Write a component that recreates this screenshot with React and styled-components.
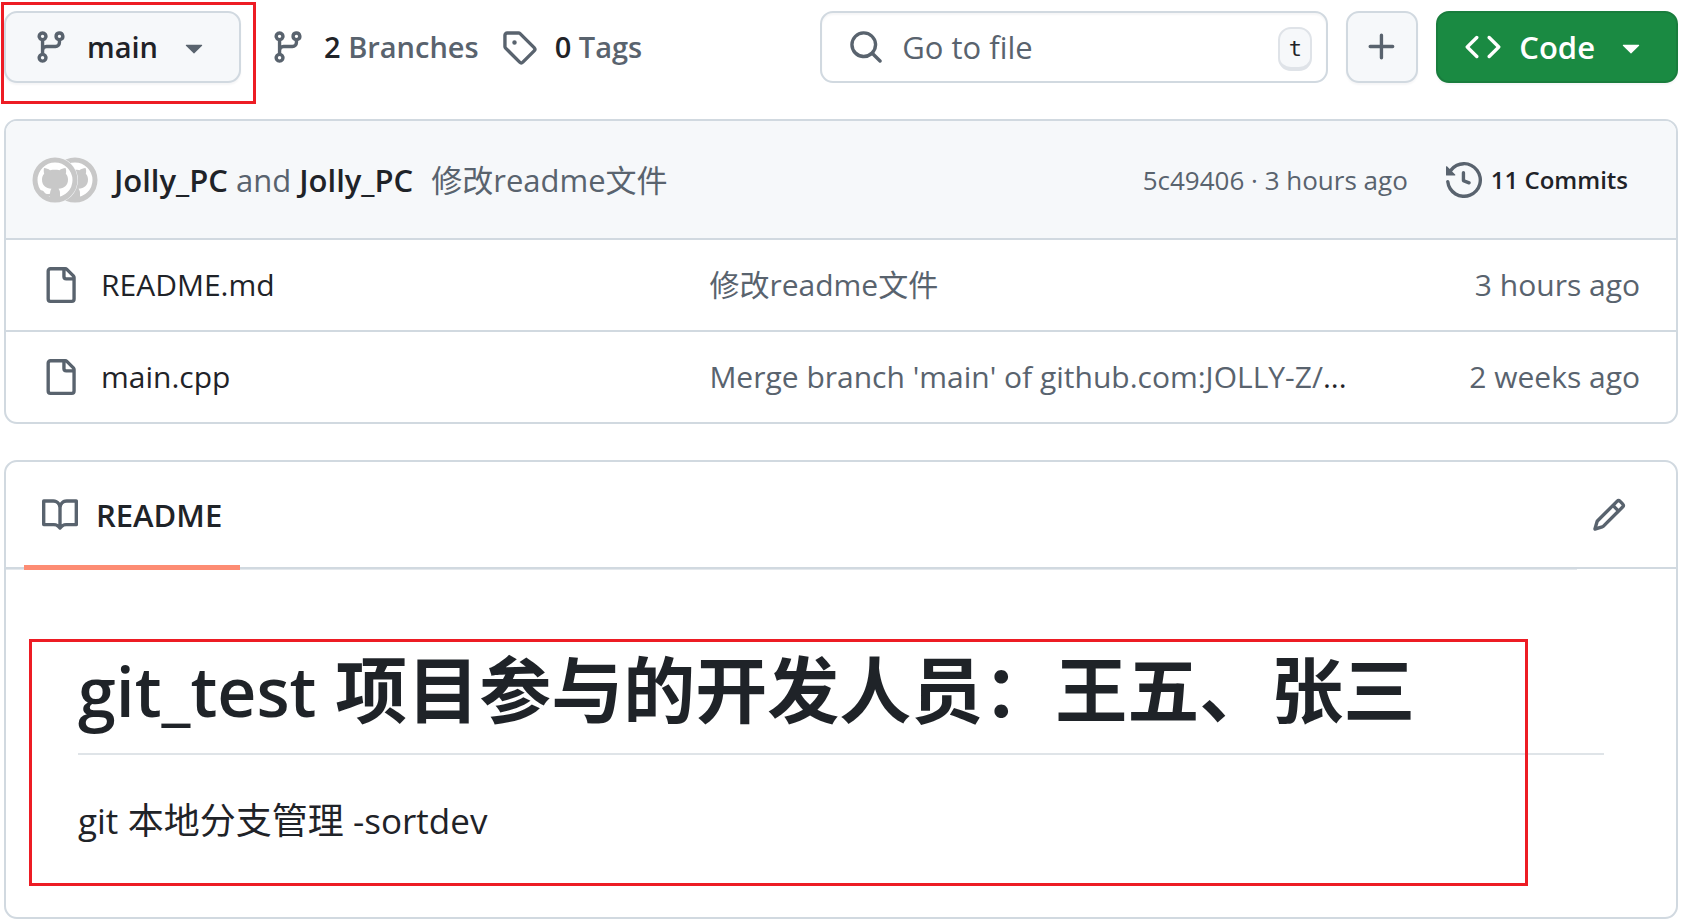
import React from 'react'
import styled, { createGlobalStyle } from 'styled-components';

const GlobalStyle = createGlobalStyle`
  *{
    box-sizing: border-box;
  }
  body{
    margin: 0;
    background-color: #ffffff;
    color: #1f2328;
    font-family: 'Open Sans', 'Noto Sans', 'Noto Sans CJK SC', sans-serif;
    font-size: 30px;
    line-height: 48px;
  }
  a{
    color: inherit;
    text-decoration: none;
  }
  button, input{
    font: inherit;
    color: inherit;
  }
`;

const ICONS = {
  branch: 'M9.5 3.25a2.25 2.25 0 1 1 3 2.122V6A2.5 2.5 0 0 1 10 8.5H6a1 1 0 0 0-1 1v1.128a2.251 2.251 0 1 1-1.5 0V5.372a2.25 2.25 0 1 1 1.5 0v1.836A2.493 2.493 0 0 1 6 7h4a1 1 0 0 0 1-1v-.628A2.25 2.25 0 0 1 9.5 3.25Zm-6 0a.75.75 0 1 0 1.5 0 .75.75 0 0 0-1.5 0Zm8.25-.75a.75.75 0 1 0 0 1.5.75.75 0 0 0 0-1.5ZM4.25 12a.75.75 0 1 0 0 1.5.75.75 0 0 0 0-1.5Z',
  tag: 'M1 7.775V2.75C1 1.784 1.784 1 2.75 1h5.025c.464 0 .91.184 1.238.513l6.25 6.25a1.75 1.75 0 0 1 0 2.474l-5.026 5.026a1.75 1.75 0 0 1-2.474 0l-6.25-6.25A1.752 1.752 0 0 1 1 7.775Zm1.5 0c0 .066.026.13.073.177l6.25 6.25a.25.25 0 0 0 .354 0l5.025-5.025a.25.25 0 0 0 0-.354l-6.25-6.25a.25.25 0 0 0-.177-.073H2.75a.25.25 0 0 0-.25.25ZM6 5a1 1 0 1 1 0 2 1 1 0 0 1 0-2Z',
  search: 'M10.68 11.74a6 6 0 0 1-7.922-8.982 6 6 0 0 1 8.982 7.922l3.04 3.04a.749.749 0 0 1-.326 1.275.749.749 0 0 1-.734-.215ZM11.5 7a4.499 4.499 0 1 0-8.997 0A4.499 4.499 0 0 0 11.5 7Z',
  plus: 'M7.75 2a.75.75 0 0 1 .75.75V7h4.25a.75.75 0 0 1 0 1.5H8.5v4.25a.75.75 0 0 1-1.5 0V8.5H2.75a.75.75 0 0 1 0-1.5H7V2.75A.75.75 0 0 1 7.75 2Z',
  code: 'm11.28 3.22 4.25 4.25a.75.75 0 0 1 0 1.06l-4.25 4.25a.749.749 0 0 1-1.275-.326.749.749 0 0 1 .215-.734L13.94 8l-3.72-3.72a.749.749 0 0 1 .326-1.275.749.749 0 0 1 .734.215Zm-6.56 0a.751.751 0 0 1 1.042.018.751.751 0 0 1 .018 1.042L2.06 8l3.72 3.72a.749.749 0 0 1-.326 1.275.749.749 0 0 1-.734-.215L.47 8.53a.75.75 0 0 1 0-1.06Z',
  caret: 'm4.427 7.427 3.396 3.396a.25.25 0 0 0 .354 0l3.396-3.396A.25.25 0 0 0 11.396 7H4.604a.25.25 0 0 0-.177.427Z',
  history: 'm.427 1.927 1.215 1.215a8.002 8.002 0 1 1-1.6 5.685.75.75 0 1 1 1.493-.154 6.5 6.5 0 1 0 1.18-4.458l1.358 1.358A.25.25 0 0 1 3.896 6H.25A.25.25 0 0 1 0 5.75V2.104a.25.25 0 0 1 .427-.177ZM7.75 4a.75.75 0 0 1 .75.75v2.992l2.028.812a.75.75 0 0 1-.557 1.392l-2.5-1A.751.751 0 0 1 7 8.25v-3.5A.75.75 0 0 1 7.75 4Z',
  file: 'M2 1.75C2 .784 2.784 0 3.75 0h6.586c.464 0 .909.184 1.237.513l2.914 2.914c.329.328.513.773.513 1.237v9.586A1.75 1.75 0 0 1 13.25 16h-9.5A1.75 1.75 0 0 1 2 14.25Zm1.75-.25a.25.25 0 0 0-.25.25v12.5c0 .138.112.25.25.25h9.5a.25.25 0 0 0 .25-.25V6h-2.75A1.75 1.75 0 0 1 9 4.25V1.5Zm6.75.062V4.25c0 .138.112.25.25.25h2.688l-.011-.013-2.914-2.914-.013-.011Z',
  book: 'M0 1.75A.75.75 0 0 1 .75 1h4.253c1.227 0 2.317.59 3 1.501A3.743 3.743 0 0 1 11.006 1h4.245a.75.75 0 0 1 .75.75v10.5a.75.75 0 0 1-.75.75h-4.507a2.25 2.25 0 0 0-1.591.659l-.622.621a.75.75 0 0 1-1.06 0l-.622-.621A2.25 2.25 0 0 0 5.258 13H.75a.75.75 0 0 1-.75-.75Zm7.251 10.324.004-5.073-.002-2.253A2.25 2.25 0 0 0 5.003 2.5H1.5v9h3.757a3.75 3.75 0 0 1 1.994.574ZM8.755 4.75l-.004 7.322a3.752 3.752 0 0 1 1.992-.572H14.5v-9h-3.495a2.25 2.25 0 0 0-2.25 2.25Z',
  pencil: 'M11.013 1.427a1.75 1.75 0 0 1 2.474 0l1.086 1.086a1.75 1.75 0 0 1 0 2.474l-8.61 8.61c-.21.21-.47.364-.756.445l-3.251.93a.75.75 0 0 1-.927-.928l.929-3.25c.081-.286.235-.547.445-.758l8.61-8.61Zm.176 4.823L9.75 4.81l-6.286 6.287a.253.253 0 0 0-.064.108l-.558 1.953 1.953-.558a.253.253 0 0 0 .108-.064Zm1.238-3.763a.25.25 0 0 0-.354 0L10.811 3.75l1.439 1.44 1.263-1.263a.25.25 0 0 0 0-.354Z',
};

const Svg = styled.svg`
  display: block;
  flex: none;
  width: 36px;
  height: 36px;
  fill: ${({ $color }) => $color || '#59636e'};
`;

const Icon = ({ name, color }) => (
  <Svg viewBox="0 0 16 16" $color={color} aria-hidden="true">
    <path d={ICONS[name]} />
  </Svg>
)

const Page = styled.main`
  padding: 11px 27px 0 4px;
`;

const Toolbar = styled.div`
  display: flex;
  align-items: center;
  height: 72px;
  margin-bottom: 36px;
`;

const Refs = styled.div`
  display: flex;
  align-items: center;
  font-size: 29px;
`;

const Button = styled.button`
  display: flex;
  align-items: center;
  justify-content: center;
  height: 72px;
  padding: ${({ $square }) => $square ? '0' : '0 27px'};
  width: ${({ $square }) => $square ? '72px' : 'auto'};
  border: 2px solid #d1d9e0;
  border-radius: 13px;
  background-color: #f6f8fa;
  box-shadow: 0 2px 2px rgba(31, 35, 40, 0.04);
  font-weight: 600;
  cursor: pointer;
  ${({ $primary }) => $primary && `
    border-color: #197d3d;
    background-color: #1a8a42;
    color: #ffffff;
  `}
`;

const ButtonText = styled.span`
  margin: 0 18px;
`;

// red frame drawn over the page
const Highlight = styled.div`
  position: absolute;
  top: ${({ $top }) => $top};
  left: ${({ $left }) => $left};
  right: ${({ $right }) => $right};
  bottom: ${({ $bottom }) => $bottom};
  border: 3px solid #ed1c24;
  pointer-events: none;
`;

const BranchPicker = styled.div`
  position: relative;
  margin-right: 29px;
`;

const Stat = styled.a`
  display: flex;
  align-items: center;
  margin-right: 22px;
  color: #59636e;
  font-weight: 600;
  white-space: pre;
  strong{
    color: #1f2328;
    font-weight: 600;
  }
`;

const StatText = styled.span`
  margin-left: 18px;
`;

const Actions = styled.div`
  display: flex;
  gap: 18px;
  margin-left: auto;
  font-size: 31px;
`;

const SearchBox = styled.label`
  display: flex;
  align-items: center;
  width: 508px;
  height: 72px;
  padding: 0 14px 0 26px;
  border: 2px solid #d1d9e0;
  border-radius: 13px;
  box-shadow: inset 0 2px 2px rgba(31, 35, 40, 0.04);
`;

const SearchInput = styled.input`
  flex: 1;
  min-width: 0;
  margin-left: 18px;
  padding: 0;
  border: 0;
  outline: 0;
  background: none;
  &::placeholder{
    color: #59636e;
    opacity: 1;
  }
`;

const Key = styled.kbd`
  width: 34px;
  height: 44px;
  margin-top: 4px;
  border: 2px solid #dfe3e8;
  border-bottom-width: 4px;
  border-radius: 13px;
  background-color: #f6f8fa;
  font-family: 'DejaVu Sans Mono', monospace;
  font-size: 22px;
  line-height: 40px;
  text-align: center;
`;

const Card = styled.section`
  border: 2px solid #d1d9e0;
  border-radius: 13px;
  overflow: hidden;
`;

const CommitBar = styled.div`
  display: flex;
  align-items: center;
  height: 117px;
  padding: 0 48px 0 26px;
  background-color: #f6f8fa;
  color: #59636e;
  font-size: 31px;
  white-space: pre;
`;

const Avatars = styled.svg`
  flex: none;
  width: 66px;
  height: 46px;
  margin-right: 16px;
`;

const Author = styled.a`
  color: #1f2328;
  font-weight: 600;
`;

const Message = styled.a`
  margin-left: 18px;
`;

const CommitMeta = styled.div`
  display: flex;
  align-items: center;
  margin-left: auto;
  font-size: 26px;
`;

const Commits = styled.a`
  display: flex;
  align-items: center;
  gap: 9px;
  margin-left: 38px;
  color: #1f2328;
  font-size: 24px;
  font-weight: 600;
`;

const Files = styled.table`
  width: 100%;
  border-spacing: 0;
  table-layout: fixed;
  td{
    height: 92px;
    padding: 0;
    border-top: 2px solid #d1d9e0;
    color: #59636e;
    white-space: nowrap;
  }
`;

const NameCol = styled.col`
  width: 42%;
`;

const AgeCol = styled.col`
  width: 19%;
`;

const FileName = styled.a`
  display: flex;
  align-items: center;
  gap: 23px;
  padding-left: 36px;
  color: #1f2328;
`;

const FileMessage = styled.div`
  padding-left: 2px;
  color: #1f2328;
  a{
    color: #59636e;
  }
`;

const Age = styled.div`
  padding-right: 36px;
  text-align: right;
`;

const ReadmeCard = styled(Card)`
  margin-top: 36px;
`;

const ReadmeBar = styled.div`
  display: flex;
  align-items: center;
  height: 107px;
  border-bottom: 2px solid #d1d9e0;
`;

const Nav = styled.nav`
  display: flex;
  flex: 1;
  padding-left: 18px;
  box-shadow: 0 2px 0 #d1d9e0, 0 3px 0 #e4e8ec;
`;

const Tab = styled.a`
  position: relative;
  display: flex;
  align-items: center;
  gap: 18px;
  height: 105px;
  padding: 0 18px;
  font-size: 31px;
  font-weight: 600;
  &::after{
    content: '';
    position: absolute;
    left: 0;
    right: 0;
    bottom: -3px;
    height: 5px;
    background-color: #fd8c73;
  }
`;

const EditButton = styled.button`
  margin: 0 49px 0 14px;
  padding: 0;
  border: 0;
  background: none;
  cursor: pointer;
`;

const Article = styled.article`
  position: relative;
  padding: 75px 72px 69px;
`;

const Title = styled.h1`
  margin: 0 0 39px;
  padding-bottom: 17px;
  border-bottom: 2px solid #dfe4e8;
  font-size: 72px;
  font-weight: 600;
  line-height: 90px;
  b{
    font-weight: 700;
  }
`;

const TitleLatin = styled.span`
  font-size: 68px;
`;

const Text = styled.p`
  margin: 0;
  font-size: 36px;
  line-height: 54px;
`;

const TextLatin = styled.span`
  font-size: 35px;
`;

const Cat = ({ x }) => (
  <g transform={`translate(${x} 0)`}>
    <circle cx="23" cy="23" r="23" fill="#f6f8fa" />
    <circle cx="23" cy="23" r="20" fill="#ffffff" stroke="#c8c8c8" strokeWidth="5" />
    <path fill="#c8c8c8" d="M12 11c2 0 4.500 1 6 2.200 3-.6 6.500-.6 9.500 0 1.500-1.200 4-2.200 6-2.200.9 2 .8 4 .3 5.800 1.600 1.700 2.200 3.600 2.200 5.700 0 6.200-4 8.800-9.500 9.300 1 1.200 1.500 2.500 1.500 4.200v7h-10v-4c-5.500 1-7-2-8-3.500-.6-.9-1.300-1.500-2.500-2 3-.7 4.200 1 5.200 2.300 1 1.300 3 1.600 5.300 1 .200-2 .5-3.800 1.500-5-5.500-.5-9.500-3.100-9.500-9.300 0-2.100.6-4 2.200-5.700-.5-1.800-.6-3.800-.2-5.800Z" />
  </g>
)

const FILES = [
  { name: 'README.md', message: '修改readme文件', age: '3 hours ago' },
  { name: 'main.cpp', message: "Merge branch 'main' of github.com:JOLLY-Z/", more: true, age: '2 weeks ago' },
];

const App = () => {
    return (
        <Page>
            <GlobalStyle />
            <Toolbar>
                <Refs>
                    <BranchPicker>
                        <Button type="button">
                            <Icon name="branch" />
                            <ButtonText>main</ButtonText>
                            <Icon name="caret" />
                        </Button>
                        <Highlight $top="-9px" $left="-3px" $right="-15px" $bottom="-21px" />
                    </BranchPicker>
                    <Stat href="#branches">
                        <Icon name="branch" />
                        <StatText><strong>2</strong> Branches</StatText>
                    </Stat>
                    <Stat href="#tags">
                        <Icon name="tag" />
                        <StatText><strong>0</strong> Tags</StatText>
                    </Stat>
                </Refs>
                <Actions>
                    <SearchBox>
                        <Icon name="search" />
                        <SearchInput type="text" placeholder="Go to file" aria-label="Go to file" />
                        <Key>t</Key>
                    </SearchBox>
                    <Button type="button" $square aria-label="Add file">
                        <Icon name="plus" />
                    </Button>
                    <Button type="button" $primary>
                        <Icon name="code" color="#ffffff" />
                        <ButtonText>Code</ButtonText>
                        <Icon name="caret" color="#ffffff" />
                    </Button>
                </Actions>
            </Toolbar>

            <Card>
                <CommitBar>
                    <Avatars viewBox="0 0 66 46" aria-hidden="true">
                        <Cat x={20} />
                        <Cat x={0} />
                    </Avatars>
                    <Author href="#author">Jolly_PC</Author> and <Author href="#author">Jolly_PC</Author>
                    <Message href="#commit">修改readme文件</Message>
                    <CommitMeta>
                        <a href="#commit">5c49406 · 3 hours ago</a>
                        <Commits href="#commits">
                            <Icon name="history" />
                            11 Commits
                        </Commits>
                    </CommitMeta>
                </CommitBar>
                <Files>
                    <colgroup>
                        <NameCol />
                        <col />
                        <AgeCol />
                    </colgroup>
                    <tbody>
                        {FILES.map((file) => (
                            <tr key={file.name}>
                                <td>
                                    <FileName href="#file">
                                        <Icon name="file" />
                                        {file.name}
                                    </FileName>
                                </td>
                                <td>
                                    <FileMessage>
                                        <a href="#commit">{file.message}</a>{file.more && '...'}
                                    </FileMessage>
                                </td>
                                <td><Age>{file.age}</Age></td>
                            </tr>
                        ))}
                    </tbody>
                </Files>
            </Card>

            <ReadmeCard>
                <ReadmeBar>
                    <Nav>
                        <Tab href="#readme">
                            <Icon name="book" />
                            README
                        </Tab>
                    </Nav>
                    <EditButton type="button" aria-label="Edit file">
                        <Icon name="pencil" />
                    </EditButton>
                </ReadmeBar>
                <Article>
                    <Title><TitleLatin>git_test</TitleLatin> <b>项目参与的开发人员：王五、张三</b></Title>
                    <Text><TextLatin>git</TextLatin> 本地分支管理 <TextLatin>-sortdev</TextLatin></Text>
                    <Highlight $top="70px" $left="23px" $right="148px" $bottom="31px" />
                </Article>
            </ReadmeCard>
        </Page>
    )
}

export default App
